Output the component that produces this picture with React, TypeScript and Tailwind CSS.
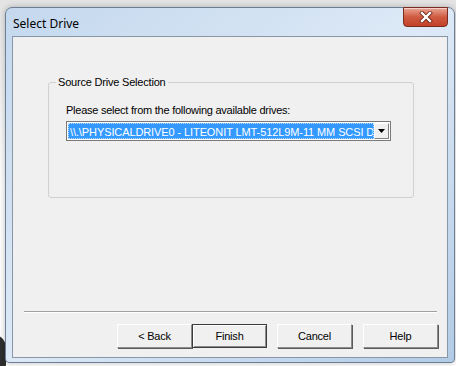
import React from "react";

const btnBase =
  "h-[24px] w-[75px] flex items-center justify-center text-[11px] tracking-[-0.2px] text-black bg-[#f0f0f0] border-t border-l border-t-white border-l-white border-r border-b border-r-[#8c8c8c] border-b-[#8c8c8c] shadow-[1px_1px_0_#5a5a5a]";

export default function App() {
  return (
    <div
      className="relative w-[456px] h-[366px] overflow-hidden bg-gradient-to-b from-[#e4e4e4] via-white to-white"
      style={{ fontFamily: '"Liberation Sans", Arial, sans-serif' }}
    >
      <div className="absolute left-[-22px] top-[334px] w-[28px] h-[44px] rounded-full bg-[#2e2e2e]" />
      <div className="relative ml-[5px] mt-[7px] w-[450px] h-[356px] rounded-t-[7px] rounded-b-[4px] border border-[#6d7f94] bg-gradient-to-br from-[#c4d8ee] via-[#dde9f6] to-[#b3cbe6] flex flex-col px-[6px] pb-[4px] shadow-[0_0_6px_rgba(0,0,0,0.25)]">
        <div className="h-[28px] flex items-start justify-between">
          <span
            className="mt-[8px] ml-[1px] text-[12px] text-black leading-[16px]"
            style={{ fontFamily: '"Noto Sans", "Open Sans", sans-serif' }}
          >
            Select Drive
          </span>
          <div className="mt-[-1px] w-[45px] h-[20px] rounded-b-[4px] border border-[#7a2b1f] bg-gradient-to-b from-[#e9a595] via-[#cf5a40] to-[#c24128] flex items-center justify-center shadow-[inset_0_1px_0_rgba(255,255,255,0.5)]">
            <svg width="14" height="12" viewBox="0 0 14 12">
              <path d="M3 2 L11 10 M11 2 L3 10" stroke="#6a2318" strokeWidth="4" strokeLinecap="square" />
              <path d="M3 2 L11 10 M11 2 L3 10" stroke="#ffffff" strokeWidth="2.4" strokeLinecap="square" />
            </svg>
          </div>
        </div>
        <div className="flex-1 border border-[#8797a8] bg-[#f0f0f0] flex flex-col">
          <fieldset className="ml-[35px] mt-[38px] w-[366px] h-[123px] border border-[#d0d0d0] rounded-[3px] px-[17px]">
            <legend className="ml-[-10px] px-[2px] text-[11px] tracking-[-0.2px] text-black leading-[14px]">
              Source Drive Selection
            </legend>
            <div className="mt-[14px] text-[11px] tracking-[-0.25px] text-black leading-[14px]">
              Please select from the following available drives:
            </div>
            <div className="mt-[4px] w-[325px] h-[20px] border border-[#7a7a7a] bg-white flex items-center p-[1px]">
              <div className="flex-1 h-full bg-[#3399ff] text-white text-[11px] tracking-[-0.1px] leading-[16px] whitespace-nowrap overflow-hidden pl-[1px] border border-dotted border-[#c0dcff]">
                {"\\\\.\\PHYSICALDRIVE0 - LITEONIT LMT-512L9M-11 MM SCSI Disk Device"}
              </div>
              <div className="w-[15px] h-full bg-[#f0f0f0] border-t border-l border-white border-r border-b border-r-[#808080] border-b-[#808080] flex items-center justify-center">
                <svg width="7" height="4" viewBox="0 0 7 4">
                  <path d="M0 0 H7 L3.5 4 Z" fill="#000" />
                </svg>
              </div>
            </div>
          </fieldset>
          <div className="ml-[11px] mt-[113px] w-[413px] h-[2px] border-t border-[#a0a0a0] border-b border-b-white" />
          <div className="ml-[104px] mt-[11px] flex">
            <button className={btnBase}>&lt; Back</button>
            <button className="h-[24px] w-[75px] flex items-center justify-center text-[11px] tracking-[-0.2px] text-black bg-[#f0f0f0] border border-[#3c3c3c] shadow-[inset_1px_1px_0_#ffffff,inset_-1px_-1px_0_#8c8c8c]">
              Finish
            </button>
            <button className={btnBase + " ml-[10px]"}>Cancel</button>
            <button className={btnBase + " ml-[11px] w-[74px]"}>Help</button>
          </div>
        </div>
      </div>
    </div>
  );
}
